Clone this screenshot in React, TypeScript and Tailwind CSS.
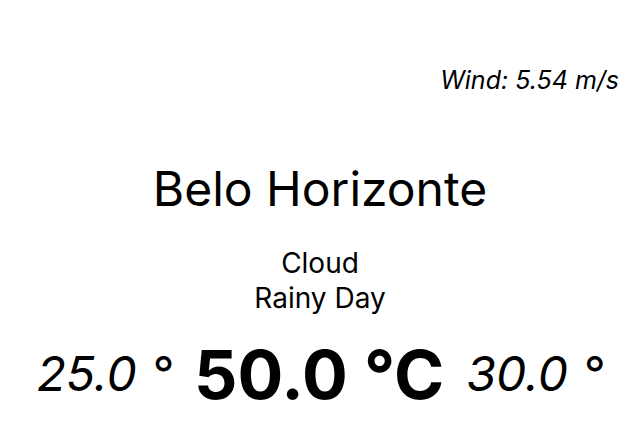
import React from "react";

const App = () => {
  return (
    <div className="w-[640px] h-[432px] bg-white text-black flex flex-col font-['Inter',sans-serif]">
      <div className="flex justify-end pt-[64px] pr-[21px]">
        <p className="italic text-[25px] leading-[32px]">Wind: 5.54 m/s</p>
      </div>
      <div className="flex flex-col items-center mt-[65px]">
        <h1 className="text-[48px] leading-[56px]">Belo Horizonte</h1>
        <div className="mt-[29px] flex flex-col items-center text-[28px] leading-[35px]">
          <p>Cloud</p>
          <p>Rainy Day</p>
        </div>
        <div className="mt-[18px] flex items-center gap-[22px]">
          <span className="italic text-[48px] leading-[80px]">25.0 °</span>
          <span className="font-bold text-[68px] leading-[80px]">50.0 °C</span>
          <span className="italic text-[48px] leading-[80px]">30.0 °</span>
        </div>
      </div>
    </div>
  );
};

export default App;
